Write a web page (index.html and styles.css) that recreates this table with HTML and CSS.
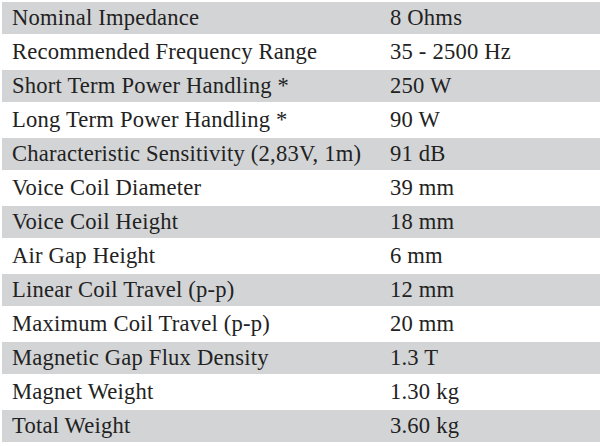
FILE: index.html
```html
<!DOCTYPE html>
<html>
<head>
<meta charset="utf-8">
<link rel="stylesheet" href="styles.css">
</head>
<body>
<div class="specs">
  <div class="row shade"><span class="label">Nominal Impedance</span><span class="value">8 Ohms</span></div>
  <div class="row"><span class="label">Recommended Frequency Range</span><span class="value">35 - 2500 Hz</span></div>
  <div class="row shade"><span class="label">Short Term Power Handling *</span><span class="value">250 W</span></div>
  <div class="row"><span class="label">Long Term Power Handling *</span><span class="value">90 W</span></div>
  <div class="row shade"><span class="label">Characteristic Sensitivity (2,83V, 1m)</span><span class="value">91 dB</span></div>
  <div class="row"><span class="label">Voice Coil Diameter</span><span class="value">39 mm</span></div>
  <div class="row shade"><span class="label">Voice Coil Height</span><span class="value">18 mm</span></div>
  <div class="row"><span class="label">Air Gap Height</span><span class="value">6 mm</span></div>
  <div class="row shade"><span class="label">Linear Coil Travel (p-p)</span><span class="value">12 mm</span></div>
  <div class="row"><span class="label">Maximum Coil Travel (p-p)</span><span class="value">20 mm</span></div>
  <div class="row shade"><span class="label">Magnetic Gap Flux Density</span><span class="value">1.3 T</span></div>
  <div class="row"><span class="label">Magnet Weight</span><span class="value">1.30 kg</span></div>
  <div class="row shade"><span class="label">Total Weight</span><span class="value">3.60 kg</span></div>
</div>
</body>
</html>
```

FILE: styles.css
```css
html, body {
  margin: 0;
  padding: 0;
  background: #ffffff;
}
.specs {
  display: flex;
  flex-direction: column;
  gap: 2px;
  padding: 2px 0 0 2px;
  width: 598px;
  font-family: "Liberation Serif", serif;
  font-size: 22.6px;
  letter-spacing: 0.2px;
  color: #222222;
}
.row {
  display: grid;
  grid-template-columns: 378px 1fr;
  align-items: center;
  height: 32px;
}
.row.shade {
  background: #d3d4d6;
}
.label, .value {
  padding-left: 10px;
  white-space: nowrap;
}
```
